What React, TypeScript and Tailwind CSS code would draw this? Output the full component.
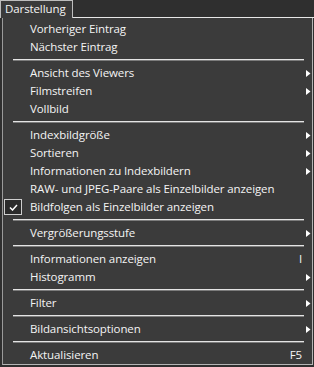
import React from 'react';

type MenuEntry =
  | { type: 'item'; label: string; submenu?: boolean; shortcut?: string; checked?: boolean }
  | { type: 'separator' };

const entries: MenuEntry[] = [
  { type: 'item', label: 'Vorheriger Eintrag' },
  { type: 'item', label: 'Nächster Eintrag' },
  { type: 'separator' },
  { type: 'item', label: 'Ansicht des Viewers', submenu: true },
  { type: 'item', label: 'Filmstreifen', submenu: true },
  { type: 'item', label: 'Vollbild' },
  { type: 'separator' },
  { type: 'item', label: 'Indexbildgröße', submenu: true },
  { type: 'item', label: 'Sortieren', submenu: true },
  { type: 'item', label: 'Informationen zu Indexbildern', submenu: true },
  { type: 'item', label: 'RAW- und JPEG-Paare als Einzelbilder anzeigen' },
  { type: 'item', label: 'Bildfolgen als Einzelbilder anzeigen', checked: true },
  { type: 'separator' },
  { type: 'item', label: 'Vergrößerungsstufe', submenu: true },
  { type: 'separator' },
  { type: 'item', label: 'Informationen anzeigen', shortcut: 'I' },
  { type: 'item', label: 'Histogramm', submenu: true },
  { type: 'separator' },
  { type: 'item', label: 'Filter', submenu: true },
  { type: 'separator' },
  { type: 'item', label: 'Bildansichtsoptionen', submenu: true },
  { type: 'separator' },
  { type: 'item', label: 'Aktualisieren', shortcut: 'F5' },
];

function SubmenuArrow() {
  return (
    <svg width="5" height="7" viewBox="0 0 5 7" className="block">
      <polygon points="0,0 4.5,3.5 0,7" fill="#ffffff" />
    </svg>
  );
}

function CheckBox() {
  return (
    <div className="ml-[1px] flex h-[16px] w-[18px] items-center justify-center border border-[#cfcfcf] bg-[#2b2b2b]">
      <svg width="9" height="7" viewBox="0 0 9 7">
        <path d="M1 3.5 L3.5 6 L8 1" fill="none" stroke="#ffffff" strokeWidth="1.5" />
      </svg>
    </div>
  );
}

export default function App() {
  return (
    <div className="h-[367px] w-[314px] overflow-hidden bg-[#2f2f2f] font-['Open_Sans',sans-serif] text-[11.5px] font-medium tracking-[-0.1px] text-[#f4f4f4]">
      {/* menu bar */}
      <div className="flex h-[18px]">
        <div className="h-[18px] w-[73px] border border-b-0 border-[#bdbdbd] bg-[#3a3a3a] pl-[4px] leading-[16px]">
          Darstellung
        </div>
        <div className="flex-1 border-b border-[#e6e6e6]" />
      </div>

      {/* dropdown */}
      <div className="ml-[2px] w-[311px] border-x border-b border-l-[#9a9a9a] border-r-[#b5b5b5] border-b-[#b5b5b5] bg-[#3b3b3b] pt-[2px]">
        {entries.map((entry, i) =>
          entry.type === 'separator' ? (
            <div key={i} className="flex h-[8px] items-center pl-[10px] pr-[8px]">
              <div className="h-[2px] w-full border-t border-b border-t-[#e4e4e4] border-b-[#7c7c7c]" />
            </div>
          ) : (
            <div key={i} className="flex h-[18px] items-center">
              <div className="flex w-[27px] shrink-0 items-center">
                {entry.checked && <CheckBox />}
              </div>
              <span className="flex-1 whitespace-nowrap leading-[18px]">{entry.label}</span>
              {entry.shortcut && <span className="leading-[18px]">{entry.shortcut}</span>}
              <div className="flex w-[10px] shrink-0 items-center pl-[4px]">
                {entry.submenu && <SubmenuArrow />}
              </div>
            </div>
          )
        )}
      </div>
    </div>
  );
}
